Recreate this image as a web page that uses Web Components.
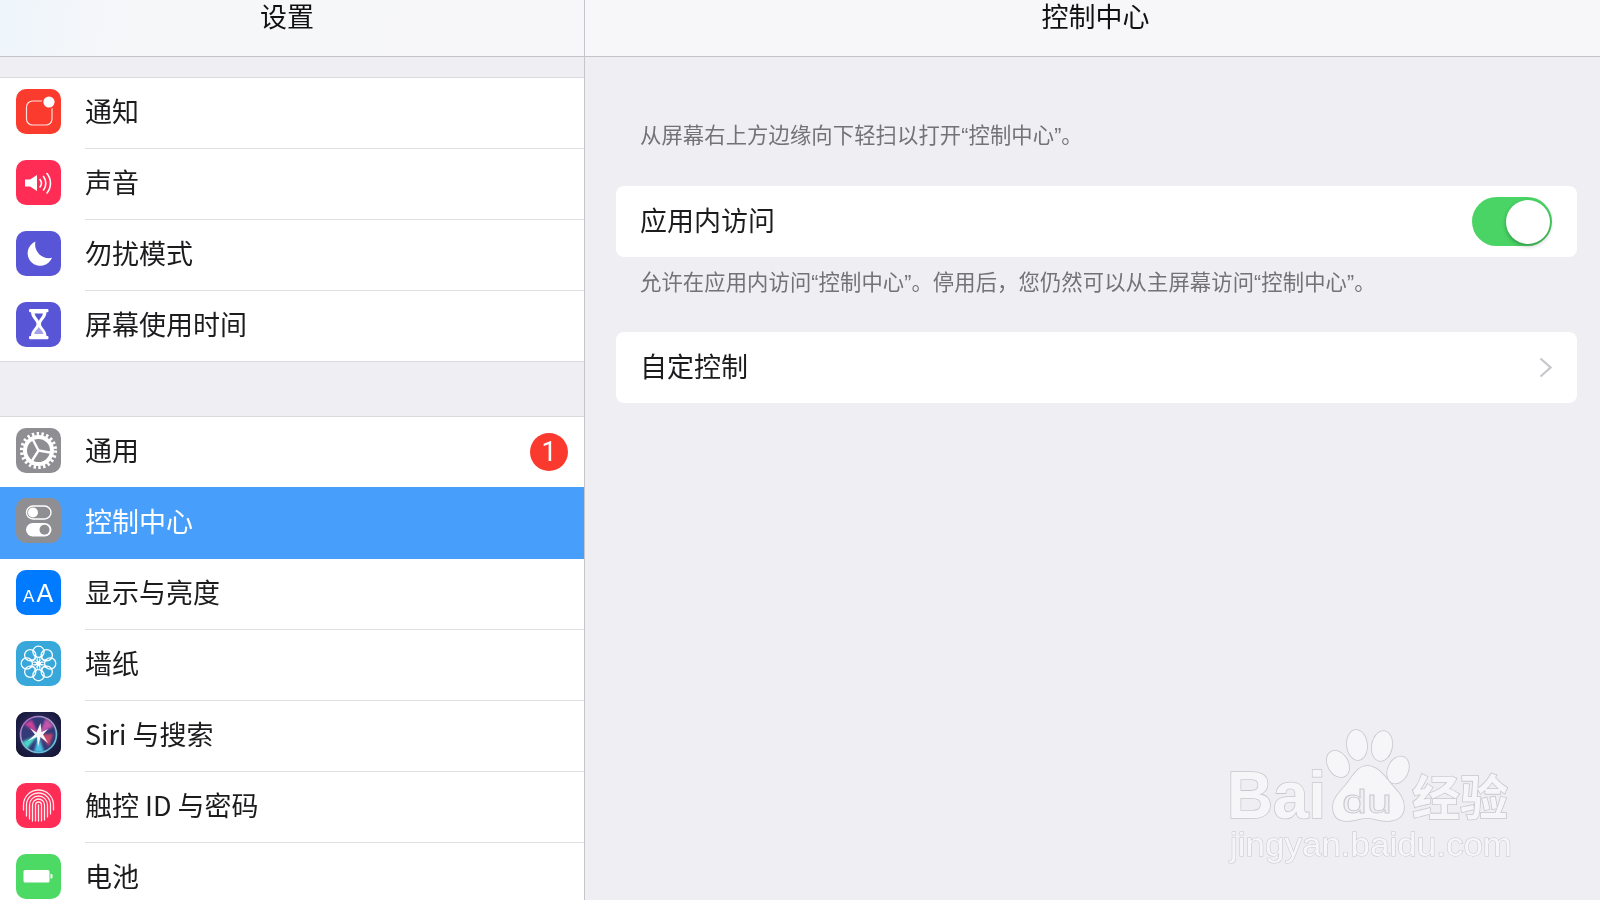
<!DOCTYPE html>
<html lang="zh">
<head>
<meta charset="utf-8">
<title>控制中心</title>
<style>
    html, body { margin: 0; height: 100%; overflow: hidden; background: #eeeef3; }
    body { font-family: "Noto Sans CJK SC", "Noto Sans", sans-serif; }
</style>
</head>
<body>
<settings-screen></settings-screen>
<script>
const ICONS = {
    notify: `<rect x="10.5" y="12" width="25.5" height="24" rx="6" fill="none" stroke="#fff" stroke-opacity=".85" stroke-width="1.2"/>
        <circle cx="33" cy="13" r="7.2" fill="#fb3b2e"/><circle cx="33" cy="13" r="5.6" fill="#fff"/>`,
    sound: `<path d="M9 19.5h5l7-4.5v16l-7-4.5H9z" fill="#fff"/>
        <g fill="none" stroke="#fff" stroke-width="1.6" stroke-linecap="round">
            <path d="M24 19.5a6 6 0 0 1 0 7.5"/><path d="M27.5 16.5a11 11 0 0 1 0 13.5"/><path d="M31 13.5a15.5 15.5 0 0 1 0 19.5"/>
        </g>`,
    moon: `<path d="M19.5 10.5a12.6 12.6 0 1 0 16.5 16.2a13.5 13.5 0 0 1-16.5-16.2z" fill="#fff"/>`,
    hourglass: `<rect x="13" y="7" width="19.5" height="3.2" rx="1.2" fill="#fff"/><rect x="13" y="34" width="19.5" height="3.2" rx="1.2" fill="#fff"/>
        <path d="M15 10h15.5c0 6-5.5 8.500-5.500 12s5.500 6 5.500 12H15c0-6 5.500-8.500 5.500-12S15 16 15 10z" fill="#fff"/>
        <path d="M18.500 11.500h8.500c-.5 3-3.400 5-4.200 7.500c-.8-2.500-3.800-4.500-4.300-7.500z" fill="#5856d6"/>
        <path d="M22.800 24.500c.5 2.500 4 4 4.500 7.500h-9c.5-3.500 4-5 4.500-7.500z" fill="#5856d6" fill-opacity=".55"/>`,
    gear: `<circle cx="22.500" cy="22.500" r="16.800" fill="none" stroke="#fff" stroke-width="3.600" stroke-dasharray="2.400 2.400"/>
        <circle cx="22.500" cy="22.500" r="13.500" fill="none" stroke="#fff" stroke-width="4"/>
        <g stroke="#fff" stroke-width="2.400" stroke-linecap="round">
            <path d="M22.500 22.500L17.300 12.500"/><path d="M22.500 22.500L34 24.500"/><path d="M22.500 22.500L16.500 32"/>
        </g>`,
    control: `<rect x="10.500" y="8" width="24.500" height="13" rx="6.500" fill="none" stroke="#fff" stroke-width="1.400"/>
        <circle cx="17" cy="14.500" r="5" fill="#fff"/>
        <rect x="10" y="25" width="25.500" height="13.500" rx="6.750" fill="#fff"/>
        <circle cx="28.500" cy="31.750" r="5" fill="#8e8e93"/>`,
    display: `<text x="7" y="31.500" font-family="'Liberation Sans', sans-serif" font-size="17" fill="#fff">A</text>
        <text x="20.500" y="31.500" font-family="'Liberation Sans', sans-serif" font-size="25" fill="#fff">A</text>`,
    wallpaper: `<g fill="none" stroke="#fff" stroke-width="1.300">
        ${[0, 45, 90, 135, 180, 225, 270, 315].map(a => `<circle cx="22.500" cy="10.800" r="5.600" transform="rotate(${a} 22.500 22.500)"/>`).join("")}
        ${[22.5, 67.5, 112.5, 157.5, 202.5, 247.5, 292.5, 337.5].map(a => `<path d="M22.500 20c-1.200-3-1.200-5 0-7c1.200 2 1.200 4 0 7z" stroke-width=".8" transform="rotate(${a} 22.500 22.500)"/>`).join("")}
        <circle cx="22.500" cy="22.500" r="2" fill="#fff"/></g>`,
    siri: `<defs>
            <radialGradient id="siri-bg" cx=".5" cy=".45" r=".75"><stop offset="0" stop-color="#3a3f78"/><stop offset=".7" stop-color="#1a1b40"/><stop offset="1" stop-color="#12132c"/></radialGradient>
            <linearGradient id="siri-ring" x1="0" y1="0" x2="1" y2="1"><stop offset="0" stop-color="#b056c8"/><stop offset=".5" stop-color="#9fb4c8"/><stop offset="1" stop-color="#50c0d8"/></linearGradient>
            <filter id="siri-glow" x="-20%" y="-20%" width="140%" height="140%"><feGaussianBlur stdDeviation="1.100"/></filter>
            <filter id="siri-soft" x="-20%" y="-20%" width="140%" height="140%"><feGaussianBlur stdDeviation=".5"/></filter>
        </defs>
        <rect width="45" height="45" fill="url(#siri-bg)"/>
        <circle cx="22.500" cy="22.500" r="18" fill="#343a78" stroke="url(#siri-ring)" stroke-width="1.700"/>
        <g filter="url(#siri-glow)">
            <path d="M22.500 22.500L8 12L16 8z" fill="#d2409c" fill-opacity=".95"/>
            <path d="M22.500 22.500L30 6L38 14z" fill="#d25ab0" fill-opacity=".9"/>
            <path d="M22.500 22.500L37 22L33 34z" fill="#e04a6c" fill-opacity=".85"/>
            <path d="M22.500 22.500L28 40L18 40z" fill="#4ac8e8" fill-opacity=".95"/>
            <path d="M22.500 22.500L6 30L11 37z" fill="#4ce0d0" fill-opacity=".95"/>
        </g>
        <path d="M24.500 11l1 9l6.500-3l-5 5.500l5 8.500l-7.500-6L22 35l-1-10l-9 4l7-6.500L14 16l6.500 4.500z" fill="#fff" fill-opacity=".95" filter="url(#siri-soft)"/>`,
    finger: `<g fill="none" stroke="#fff" stroke-opacity=".9" stroke-width="1.300" stroke-linecap="round">
            <path d="M7.500 27v-5a15 15 0 0 1 30 0v5"/>
            <path d="M10.500 33v-11a12 12 0 0 1 24 0v9"/>
            <path d="M13.500 36V22a9 9 0 0 1 18 0v12"/>
            <path d="M16.500 38V22a6 6 0 0 1 12 0v15"/>
            <path d="M19.500 38V22a3 3 0 0 1 6 0v16"/>
            <path d="M22.500 22v16"/>
        </g>`,
    battery: `<rect x="7.500" y="16" width="26" height="12.500" rx="1.500" fill="#fff"/><path d="M34.500 20h1a1 1 0 0 1 1 1v2.500a1 1 0 0 1-1 1h-1z" fill="#fff"/>`,
};

const ICON_BACKGROUNDS = {
    notify: "#fb3b2e", sound: "#ff2d55", moon: "#5856d6", hourglass: "#5856d6",
    gear: "#8e8e93", control: "#8e8e93", display: "#007aff", wallpaper: "#38a8da",
    siri: "#14152f", finger: "#ff2d55", battery: "#4cd964",
};

// App tile of a settings row, the name comes in through the "name" attribute
class SettingsIcon extends HTMLElement {
    constructor() {
        super();
        this.shadow = this.attachShadow({ mode: "open" });
    }
    connectedCallback() {
        const name = this.getAttribute("name");
        this.shadow.innerHTML = /*html*/ `
            <style>
                :host {
                    display: block;
                    width: 45px;
                    height: 45px;
                    border-radius: 10px;
                    overflow: hidden;
                    flex: none;
                    background: ${ICON_BACKGROUNDS[name]};
                }
                svg { display: block; }
            </style>
            <svg width="45" height="45" viewBox="0 0 45 45">${ICONS[name]}</svg>
        `;
    }
}
customElements.define("settings-icon", SettingsIcon);

class SettingsRow extends HTMLElement {
    constructor() {
        super();
        this.shadow = this.attachShadow({ mode: "open" });
    }
    connectedCallback() {
        const badge = this.getAttribute("badge");
        this.shadow.innerHTML = /*html*/ `
            <style>
                :host {
                    display: flex;
                    height: 71px;
                    box-sizing: border-box;
                    padding-left: 16px;
                    background: #fff;
                    color: #1c1c1e;
                }
                :host([flush]) { height: 70px; }
                :host([selected]) {
                    height: 72px;
                    background: #479ffb;
                    color: #fff;
                }
                settings-icon { margin-top: 10.500px; }
                :host([selected]) settings-icon { margin-top: 11px; }
                #body {
                    flex: 1;
                    margin-left: 24px;
                    display: flex;
                    align-items: center;
                    justify-content: space-between;
                    padding-right: 16px;
                    font-size: 27px;
                    font-weight: 400;
                    border-bottom: 1px solid #dfdfe3;
                }
                :host([selected]) #body, :host([flush]) #body { border-bottom-color: transparent; }
                #label { margin-bottom: 5px; }
                #badge {
                    width: 38px;
                    height: 38px;
                    border-radius: 50%;
                    background: #fb3a2f;
                    color: #fff;
                    font: 400 27px/38px Roboto, sans-serif;
                    text-align: center;
                }
            </style>
            <settings-icon name="${this.getAttribute("icon")}"></settings-icon>
            <div id="body">
                <span id="label"><slot></slot></span>
                ${badge ? `<span id="badge">${badge}</span>` : ""}
            </div>
        `;
    }
}
customElements.define("settings-row", SettingsRow);

class SettingsGroup extends HTMLElement {
    constructor() {
        super();
        this.shadow = this.attachShadow({ mode: "open" });
        this.shadow.innerHTML = /*html*/ `
            <style>
                :host {
                    display: block;
                    border-top: 1px solid #dadade;
                    border-bottom: 1px solid #dadade;
                    background: #fff;
                }
            </style>
            <slot></slot>
        `;
    }
}
customElements.define("settings-group", SettingsGroup);

class NavBar extends HTMLElement {
    constructor() {
        super();
        this.shadow = this.attachShadow({ mode: "open" });
        this.shadow.innerHTML = /*html*/ `
            <style>
                :host {
                    display: block;
                    height: 56px;
                    flex: none;
                    border-bottom: 1px solid #c4c4c8;
                    background: var(--nav-bg, #f7f7f9);
                    text-align: center;
                    font-size: 27px;
                    font-weight: 400;
                    line-height: 31px;
                    color: #111;
                }
            </style>
            <slot></slot>
        `;
    }
}
customElements.define("nav-bar", NavBar);

class SwitchToggle extends HTMLElement {
    constructor() {
        super();
        this.shadow = this.attachShadow({ mode: "open" });
        this.shadow.innerHTML = /*html*/ `
            <style>
                :host {
                    display: flex;
                    justify-content: flex-end;
                    align-items: center;
                    box-sizing: border-box;
                    width: 80px;
                    height: 49px;
                    padding-right: 2px;
                    border-radius: 25px;
                    background: #49d465;
                }
                #knob {
                    width: 44px;
                    height: 44px;
                    border-radius: 50%;
                    background: #fff;
                    box-shadow: 0 2px 4px rgba(0, 0, 0, .3);
                }
            </style>
            <div id="knob"></div>
        `;
    }
}
customElements.define("switch-toggle", SwitchToggle);

class DetailCard extends HTMLElement {
    constructor() {
        super();
        this.shadow = this.attachShadow({ mode: "open" });
        this.shadow.innerHTML = /*html*/ `
            <style>
                :host {
                    display: flex;
                    align-items: center;
                    justify-content: space-between;
                    height: 71px;
                    box-sizing: border-box;
                    padding: 0 24px;
                    border-radius: 8px;
                    background: #fff;
                    color: #1c1c1e;
                    font-size: 27px;
                    font-weight: 400;
                }
                #label { margin-bottom: 5px; }
            </style>
            <span id="label"><slot></slot></span>
            <slot name="accessory"></slot>
        `;
    }
}
customElements.define("detail-card", DetailCard);

class DetailNote extends HTMLElement {
    constructor() {
        super();
        this.shadow = this.attachShadow({ mode: "open" });
        this.shadow.innerHTML = /*html*/ `
            <style>
                :host {
                    display: block;
                    padding-left: 24px;
                    color: #727277;
                    font-family: "Liberation Sans", "Noto Sans CJK SC", sans-serif;
                    font-size: 21.300px;
                    letter-spacing: .12px;
                    line-height: 28px;
                }
            </style>
            <slot></slot>
        `;
    }
}
customElements.define("detail-note", DetailNote);

// Watermark that lies over the page, bottom right
class BaiduMark extends HTMLElement {
    constructor() {
        super();
        this.shadow = this.attachShadow({ mode: "open" });
        this.shadow.innerHTML = /*html*/ `
            <style>
                :host {
                    display: block;
                    position: absolute;
                    left: 1200px;
                    top: 710px;
                    width: 340px;
                    height: 170px;
                    pointer-events: none;
                }
                svg { display: block; }
                g { fill: #f6f6f9; stroke: #c8c8cc; stroke-width: 1.600; paint-order: stroke; }
                text { font-family: "Liberation Sans", sans-serif; }
            </style>
            <svg width="340" height="170" viewBox="0 0 340 170">
                <g>
                    <ellipse cx="157" cy="35" rx="10" ry="15" transform="rotate(-6 157 35)"/>
                    <ellipse cx="182" cy="36" rx="10" ry="15" transform="rotate(10 182 36)"/>
                    <ellipse cx="138" cy="54" rx="10" ry="14" transform="rotate(-30 138 54)"/>
                    <ellipse cx="198" cy="60" rx="10" ry="14" transform="rotate(25 198 60)"/>
                    <path d="M167 56c10 0 16 8 24 18c8 9 13 14 13 23c0 11-9 14-17 14c-8 0-13-3-20-3c-7 0-12 3-20 3c-9 0-14-5-14-14c0-8 5-13 12-21c8-9 12-20 22-20z"/>
                    <text x="27" y="108" font-size="67" font-weight="700" textLength="99" lengthAdjust="spacingAndGlyphs">Bai</text>
                    <text x="212" y="105" font-size="48" font-weight="700" style="font-family:'Noto Sans CJK SC',sans-serif">经验</text>
                    <text x="30" y="146" font-size="33" textLength="282" lengthAdjust="spacingAndGlyphs" style="stroke-width:1">jingyan.baidu.com</text>
                </g>
                <text x="142" y="103" font-size="33" textLength="50" lengthAdjust="spacingAndGlyphs" fill="#f0f0f4" stroke="#c9c9cd" stroke-width=".8">du</text>
            </svg>
        `;
    }
}
customElements.define("baidu-mark", BaiduMark);

class SettingsScreen extends HTMLElement {
    constructor() {
        super();
        this.shadow = this.attachShadow({ mode: "open" });
        this.shadow.innerHTML = /*html*/ `
            <style>
                :host {
                    display: grid;
                    grid-template-columns: 585px 1fr;
                    position: relative;
                    width: 1600px;
                    height: 900px;
                    overflow: hidden;
                    background: #eeeef3;
                    filter: blur(.4px);
                }
                #master {
                    display: flex;
                    flex-direction: column;
                    height: 900px;
                    overflow: hidden;
                    box-sizing: border-box;
                    border-right: 1px solid #c6c6ca;
                }
                #master nav-bar {
                    --nav-bg: linear-gradient(100deg, #eef5fb 0, #f6f7f9 22%, #f7f7f9 100%);
                    padding-right: 10px;
                }
                #master settings-group { flex: none; }
                #master settings-group:first-of-type { margin-top: 20px; }
                #master settings-group + settings-group { margin-top: 54px; }
                #detail nav-bar { padding-left: 6px; }
                #content {
                    display: flex;
                    flex-direction: column;
                    padding: 65px 23px 0 31px;
                }
                #swipe-note { margin-bottom: 36px; }
                #access-note { margin: 12px 0 35px; }
                switch-toggle { margin-right: 1px; }
                #chevron { margin-right: 1px; display: block; }
            </style>
            <section id="master">
                <nav-bar>设置</nav-bar>
                <settings-group>
                    <settings-row icon="notify">通知</settings-row>
                    <settings-row icon="sound">声音</settings-row>
                    <settings-row icon="moon">勿扰模式</settings-row>
                    <settings-row icon="hourglass" flush>屏幕使用时间</settings-row>
                </settings-group>
                <settings-group>
                    <settings-row icon="gear" badge="1" flush>通用</settings-row>
                    <settings-row icon="control" selected>控制中心</settings-row>
                    <settings-row icon="display">显示与亮度</settings-row>
                    <settings-row icon="wallpaper">墙纸</settings-row>
                    <settings-row icon="siri">Siri 与搜索</settings-row>
                    <settings-row icon="finger">触控 ID 与密码</settings-row>
                    <settings-row icon="battery">电池</settings-row>
                </settings-group>
            </section>
            <section id="detail">
                <nav-bar>控制中心</nav-bar>
                <div id="content">
                    <detail-note id="swipe-note">从屏幕右上方边缘向下轻扫以打开“控制中心”。</detail-note>
                    <detail-card>应用内访问<switch-toggle slot="accessory"></switch-toggle></detail-card>
                    <detail-note id="access-note">允许在应用内访问“控制中心”。停用后，您仍然可以从主屏幕访问“控制中心”。</detail-note>
                    <detail-card>自定控制
                        <svg slot="accessory" id="chevron" width="13" height="21" viewBox="0 0 13 21"><path d="M1.500 1.500l10 9-10 9" fill="none" stroke="#c7c7cc" stroke-width="2.200"/></svg>
                    </detail-card>
                </div>
            </section>
            <baidu-mark></baidu-mark>
        `;
    }
}
customElements.define("settings-screen", SettingsScreen);
</script>
</body>
</html>
